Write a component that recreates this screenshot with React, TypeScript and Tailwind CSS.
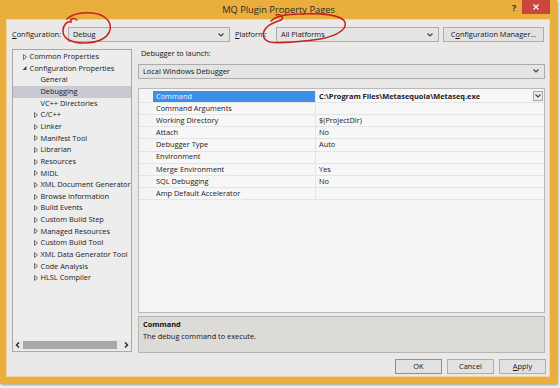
import React from "react"

const treeItems: { label: string; level: number; kind: "open" | "closed" | "none"; selected?: boolean }[] = [
  { label: "Common Properties", level: 0, kind: "closed" },
  { label: "Configuration Properties", level: 0, kind: "open" },
  { label: "General", level: 1, kind: "none" },
  { label: "Debugging", level: 1, kind: "none", selected: true },
  { label: "VC++ Directories", level: 1, kind: "none" },
  { label: "C/C++", level: 1, kind: "closed" },
  { label: "Linker", level: 1, kind: "closed" },
  { label: "Manifest Tool", level: 1, kind: "closed" },
  { label: "Librarian", level: 1, kind: "closed" },
  { label: "Resources", level: 1, kind: "closed" },
  { label: "MIDL", level: 1, kind: "closed" },
  { label: "XML Document Generator", level: 1, kind: "closed" },
  { label: "Browse Information", level: 1, kind: "closed" },
  { label: "Build Events", level: 1, kind: "closed" },
  { label: "Custom Build Step", level: 1, kind: "closed" },
  { label: "Managed Resources", level: 1, kind: "closed" },
  { label: "Custom Build Tool", level: 1, kind: "closed" },
  { label: "XML Data Generator Tool", level: 1, kind: "closed" },
  { label: "Code Analysis", level: 1, kind: "closed" },
  { label: "HLSL Compiler", level: 1, kind: "closed" },
]

const props: { name: string; value: string }[] = [
  { name: "Command", value: "C:\\Program Files\\Metasequoia\\Metaseq.exe" },
  { name: "Command Arguments", value: "" },
  { name: "Working Directory", value: "$(ProjectDir)" },
  { name: "Attach", value: "No" },
  { name: "Debugger Type", value: "Auto" },
  { name: "Environment", value: "" },
  { name: "Merge Environment", value: "Yes" },
  { name: "SQL Debugging", value: "No" },
  { name: "Amp Default Accelerator", value: "" },
]

function Chevron() {
  return (
    <svg width="6" height="4" viewBox="0 0 6 4" className="shrink-0">
      <path d="M0.5 0.5 L3 3 L5.5 0.5" fill="none" stroke="#404040" strokeWidth="1.1" />
    </svg>
  )
}

function Combo({ text, className }: { text: string; className: string }) {
  return (
    <div className={"flex items-center justify-between border border-[#acacac] bg-[#e4e4e4] pl-[4px] pr-[5px] " + className}>
      <span className="text-[#141414]">{text}</span>
      <Chevron />
    </div>
  )
}

function Arrow({ kind }: { kind: "open" | "closed" | "none" }) {
  if (kind === "none") return <span className="w-[8px] shrink-0" />
  if (kind === "open")
    return (
      <svg width="8" height="6" viewBox="0 0 8 6" className="shrink-0">
        <path d="M1.5 5 L5.5 5 L5.5 1 Z" fill="#404040" />
      </svg>
    )
  return (
    <svg width="8" height="6" viewBox="0 0 8 6" className="shrink-0">
      <path d="M2.5 0.5 L5.5 3 L2.5 5.5 Z" fill="none" stroke="#606060" strokeWidth="0.9" />
    </svg>
  )
}

function Btn({ children, isDefault }: { children: React.ReactNode; isDefault?: boolean }) {
  return (
    <div
      className={
        "flex h-[15px] w-[47px] items-center justify-center border bg-[#e2e2e2] text-[#141414] " +
        (isDefault ? "border-[#5d9bd1]" : "border-[#adadad]")
      }
    >
      {children}
    </div>
  )
}

export default function App() {
  return (
    <div
      className="relative h-[388px] w-[560px] overflow-hidden bg-[#f2f0ec] text-[7.4px] leading-none"
      style={{ fontFamily: '"Open Sans", "Noto Sans", sans-serif' }}
    >
      <div className="flex h-[384px] w-[557px] flex-col bg-[#e9ae3c] shadow-[1px_1px_2px_rgba(0,0,0,0.35)]">
        {/* title bar */}
        <div className="relative flex h-[19px] items-center justify-center">
          <span className="text-[9.3px] text-[#2a2a2a]">MQ Plugin Property Pages</span>
          <span className="absolute left-[512px] top-[3px] text-[9px] font-bold text-[#303030]">?</span>
          <div className="absolute left-[522px] top-0 flex h-[14px] w-[28px] items-center justify-center bg-[#c9463d]">
            <svg width="6" height="6" viewBox="0 0 6 6">
              <path d="M0.5 0.5 L5.5 5.5 M5.5 0.5 L0.5 5.5" stroke="#fff" strokeWidth="1.2" />
            </svg>
          </div>
        </div>

        {/* client */}
        <div className="ml-[6px] flex h-[358px] w-[544px] flex-col border border-[#f3d79a] bg-[#eae9e7] pl-[5px] pt-[7px]">
          {/* top row */}
          <div className="flex h-[15px] items-center">
            <span className="w-[56px] whitespace-nowrap text-[#141414]">
              <span className="underline">C</span>onfiguration:
            </span>
            <Combo text="Debug" className="h-[15px] w-[162px]" />
            <span className="ml-[5px] w-[41px] text-[#141414]">
              <span className="underline">P</span>latform:
            </span>
            <Combo text="All Platforms" className="h-[15px] w-[163px]" />
            <div className="ml-[4px] flex h-[15px] w-[101px] items-center justify-center whitespace-nowrap border border-[#adadad] bg-[#e2e2e2] text-[#141414]">
              C<span className="underline">o</span>nfiguration Manager...
            </div>
          </div>

          {/* main */}
          <div className="mt-[7px] flex h-[304px]">
            {/* tree */}
            <div className="flex h-[303px] w-[120px] flex-col overflow-hidden border border-[#a9a9a9] bg-[#ededed]">
              <div className="flex-1 pt-[1px]">
                {treeItems.map((it) => (
                  <div
                    key={it.label}
                    className={
                      "flex h-[11.65px] items-center whitespace-nowrap text-[#1a1a1a] " +
                      (it.selected ? "bg-[#c9cad3]" : "")
                    }
                    style={{ paddingLeft: it.level === 0 ? 8 : 19 }}
                  >
                    <Arrow kind={it.kind} />
                    <span className="ml-[0.5px]">{it.label}</span>
                  </div>
                ))}
              </div>
              <div className="mb-[1px] flex h-[10px] items-center bg-[#e8e8e8]">
                <svg width="10" height="10" viewBox="0 0 10 10" className="shrink-0">
                  <path d="M6 2.5 L3.5 5 L6 7.5" fill="none" stroke="#202020" strokeWidth="1.3" />
                </svg>
                <div className="h-[8px] w-[94px] bg-[#a8a8a8]" />
                <div className="flex-1" />
                <svg width="10" height="10" viewBox="0 0 10 10" className="shrink-0">
                  <path d="M4 2.5 L6.5 5 L4 7.5" fill="none" stroke="#202020" strokeWidth="1.3" />
                </svg>
              </div>
            </div>

            {/* right panel */}
            <div className="ml-[6px] flex w-[407px] flex-col">
              <div className="flex h-[10px] items-center pl-[3px] text-[#141414]">Debugger to launch:</div>
              <Combo text="Local Windows Debugger" className="mt-[5px] h-[15px] w-[407px]" />

              {/* property grid */}
              <div className="mt-[9px] flex h-[226px] flex-col border border-[#b9b9b9] bg-[#f4f4f4] pt-[2px]">
                {props.map((p, i) => (
                  <div key={p.name} className="flex h-[12.15px] border-b border-[#e4e4e4]">
                    <div className="w-[14px] shrink-0 bg-[#f4f4f4]" />
                    <div
                      className={
                        "flex w-[163px] shrink-0 items-center border-r border-[#e4e4e4] pl-[3px] " +
                        (i === 0 ? "bg-[#3b8fe6] text-[#eef5ff]" : "bg-[#f7f7f7] text-[#1a1a1a]")
                      }
                    >
                      {p.name}
                    </div>
                    <div className="flex flex-1 items-center justify-between bg-[#f7f7f7] pl-[3px] text-[#1a1a1a]">
                      <span className={i === 0 ? "font-bold" : ""}>{p.value}</span>
                      {i === 0 && (
                        <div className="mr-[1px] flex h-[10px] w-[10px] items-center justify-center border border-[#a8a8a8] bg-[#ececec]">
                          <Chevron />
                        </div>
                      )}
                    </div>
                  </div>
                ))}
              </div>

              {/* description */}
              <div className="mt-[3px] flex h-[37px] flex-col border border-[#b5b5b5] bg-[#dddbd8] pl-[4px] pt-[4px] text-[#141414]">
                <span className="font-bold">Command</span>
                <span className="mt-[4px]">The debug command to execute.</span>
              </div>
            </div>
          </div>

          {/* buttons */}
          <div className="mt-[6px] flex gap-[5px] pl-[383px]">
            <Btn isDefault>OK</Btn>
            <Btn>Cancel</Btn>
            <Btn>
              <span className="underline">A</span>pply
            </Btn>
          </div>
        </div>
      </div>

      {/* red hand-drawn annotations */}
      <svg className="pointer-events-none absolute left-0 top-0" width="560" height="388" viewBox="0 0 560 388">
        <path
          d="M77 20 C73 17 70 19 71 22 C67 21 63 25 63 31 C63 39 72 43 84 43 C98 43 108 38 110 30 C112 21 104 14 92 13 C82 12 72 14 67 19"
          fill="none"
          stroke="#c8201e"
          strokeWidth="1.5"
          strokeLinecap="round"
        />
        <path
          d="M271 21 C276 16 286 14 300 14 C322 13 342 15 345 22 C348 31 332 38 313 40 C296 42 280 44 270 42 C262 40 262 33 266 28 C269 24 275 22 281 20 C285 18 280 13 276 15"
          fill="none"
          stroke="#c8201e"
          strokeWidth="1.5"
          strokeLinecap="round"
        />
      </svg>
    </div>
  )
}
